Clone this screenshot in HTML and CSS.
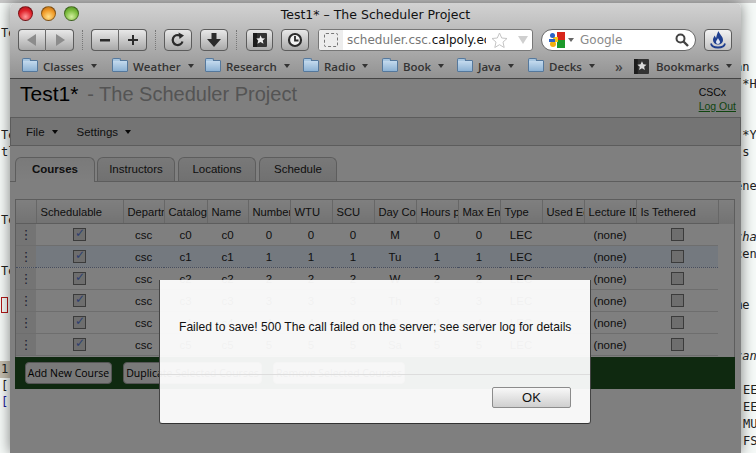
FILE: index.html
```html
<!DOCTYPE html>
<html lang="en">
<head>
    <meta charset="UTF-8">
    <meta name="viewport" content="width=device-width, initial-scale=1.0">
    <title>Test1* – The Scheduler Project</title>
    <link rel="stylesheet" href="styles.css">
</head>
<body>
    <!-- editor window behind the browser -->
    <div class="back-window">
        <div class="back-left">
            <div class="code-pane">
                <p>Te</p><p></p><p></p><p></p><p></p><p></p>
                <p>Te</p><p>tl</p><p></p><p></p><p></p>
                <p>Te</p><p></p><p></p>
                <p>Te</p><p></p>
                <p><span class="red-box"></span></p>
            </div>
            <div class="console-pane">
                <p class="console-head">1:</p>
                <p>[:</p>
                <p class="blue">[:</p>
            </div>
        </div>
        <div class="back-right">
            <div class="code-pane">
                <p></p><p></p><p>an</p><p> *H</p><p></p><p></p>
                <p> *Y</p><p> s</p><p></p><p>ene</p><p></p><p></p>
                <p><i>cha</i></p><p>cen</p><p></p><p></p><p>me</p><p></p><p></p>
                <p><i>can</i></p>
            </div>
            <div class="list-pane">
                <p>EE</p><p>EE</p><p>MU</p><p>FS</p>
            </div>
        </div>
    </div>

    <div class="browser">
        <div class="titlebar">
            <div class="lights">
                <span class="light red"></span>
                <span class="light amber"></span>
                <span class="light green"></span>
            </div>
            <span class="title-text">Test1* – The Scheduler Project</span>
        </div>

        <div class="toolbar">
            <div class="btn-group">
                <button class="tool split"><svg width="14" height="14" viewBox="0 0 14 14"><path d="M11 1v12L2 7z" fill="#8c8c8c"/></svg></button>
                <button class="tool"><svg width="14" height="14" viewBox="0 0 14 14"><path d="M3 1v12l9-6z" fill="#8c8c8c"/></svg></button>
            </div>
            <span class="sep"></span>
            <div class="btn-group">
                <button class="tool split"><svg width="14" height="14" viewBox="0 0 14 14"><path d="M2 6h10v2.400H2z" fill="#2b2b2b"/></svg></button>
                <button class="tool"><svg width="14" height="14" viewBox="0 0 14 14"><path d="M6 2h2v4h4v2H8v4H6V8H2V6h4z" fill="#2b2b2b"/></svg></button>
            </div>
            <span class="sep"></span>
            <button class="tool single"><svg width="16" height="16" viewBox="0 0 16 16"><path d="M12.500 9.500A5 5 0 1 1 10 3.600" fill="none" stroke="#2b2b2b" stroke-width="2.200"/><path d="M8.500 0.500L14 3.500 9.500 7z" fill="#2b2b2b"/></svg></button>
            <button class="tool single"><svg width="16" height="16" viewBox="0 0 16 16"><path d="M5.500 1h5v6H15l-7 8-7-8h4.500z" fill="#2b2b2b"/></svg></button>
            <span class="sep"></span>
            <button class="tool single narrow"><svg width="16" height="16" viewBox="0 0 16 16"><rect x="1" y="1" width="14" height="14" rx="1" fill="#333"/><rect x="1" y="1" width="4" height="14" fill="#1c1c1c"/><path d="M8.500 3.200l1.400 3 3.200.3-2.400 2.100.8 3.200-3-1.700-3 1.700.8-3.200L4.300 6.500l3.200-.3z" fill="#eee"/></svg></button>
            <button class="tool single"><svg width="16" height="16" viewBox="0 0 16 16"><circle cx="8" cy="8" r="6" fill="#f2f2f2" stroke="#2b2b2b" stroke-width="2.200"/><path d="M8 4v4.500h3.500" fill="none" stroke="#2b2b2b" stroke-width="1.800"/></svg></button>

            <div class="url-field">
                <span class="favicon-slot"><span class="favicon"></span></span>
                <span class="url-text">scheduler.csc.<b>calpoly.ec</b></span>
                <svg class="url-star" width="17" height="17" viewBox="0 0 17 17"><path d="M8.500 1l2.200 5 5.300.5-4 3.600 1.200 5.400-4.700-2.800-4.700 2.800 1.200-5.400-4-3.600L6.300 6z" fill="#fff" stroke="#c4c4c4"/></svg>
                <svg class="url-drop" width="10" height="8" viewBox="0 0 10 8"><path d="M0 0h10L5 8z" fill="#cfcfcf"/></svg>
            </div>

            <div class="search-field">
                <svg width="16" height="16" viewBox="0 0 16 16"><rect x="8" y="0" width="8" height="8" fill="#d8261c"/><rect x="8" y="8" width="8" height="8" fill="#1e9a2c"/><rect x="4" y="5" width="5" height="5" fill="#f5c518"/><circle cx="3.500" cy="3.500" r="2.500" fill="#2a62c8"/><circle cx="4" cy="12" r="3" fill="#f0b010"/><path d="M0 7h6v3H0z" fill="#2a62c8"/></svg>
                <span class="search-caret"></span>
                <span class="search-text">Google</span>
                <svg class="search-glass" width="14" height="14" viewBox="0 0 14 14"><circle cx="5.500" cy="5.500" r="4" fill="none" stroke="#444" stroke-width="2"/><path d="M8.500 8.500l4.500 4.500" stroke="#444" stroke-width="2.400"/></svg>
            </div>

            <button class="tool single fire"><svg width="18" height="18" viewBox="0 0 18 18"><path d="M9.500 0c.5 3 4.500 5 4.500 9 0 2.500-2 4.500-5 4.500S4 11.500 4 9c0-2 1-3.500 2-4.500 0 1.200.5 2 1.200 2.300C7.500 4.500 8.500 2 9.500 0z" fill="#1f3f8f"/><path d="M9 7c.3 1.500 2 2.400 2 4 0 1.200-.9 2-2 2s-2-.8-2-2c0-1.600 1.700-2.500 2-4z" fill="#dfe6f4"/><path d="M2 12.500c.5 2.500 3.500 4 7 4s6.500-1.500 7-4" fill="none" stroke="#1f3f8f" stroke-width="1.800"/></svg></button>
        </div>

        <div class="bookmarks">
            <span class="mark"><span class="folder"></span>Classes<span class="mark-caret"></span></span>
            <span class="mark"><span class="folder"></span>Weather<span class="mark-caret"></span></span>
            <span class="mark"><span class="folder"></span>Research<span class="mark-caret"></span></span>
            <span class="mark"><span class="folder"></span>Radio<span class="mark-caret"></span></span>
            <span class="mark"><span class="folder"></span>Book<span class="mark-caret"></span></span>
            <span class="mark"><span class="folder"></span>Java<span class="mark-caret"></span></span>
            <span class="mark"><span class="folder"></span>Decks<span class="mark-caret"></span></span>
            <span class="more">»</span>
            <span class="mark all-marks"><svg width="15" height="15" viewBox="0 0 16 16"><rect x="0" y="0" width="16" height="16" rx="1" fill="#333"/><rect x="0" y="0" width="4" height="16" fill="#1c1c1c"/><path d="M8.500 2.500l1.500 3.200 3.400.3-2.600 2.300.8 3.400-3.100-1.800-3.100 1.800.8-3.400L3.600 6l3.400-.3z" fill="#ddd"/></svg>Bookmarks<span class="mark-caret"></span></span>
        </div>

        <div class="page">
            <div class="app-header">
                <h1>Test1* <span class="subtitle">- The Scheduler Project</span></h1>
                <div class="user-box">
                    <div>CSCx</div>
                    <a href="#">Log Out</a>
                </div>
            </div>

            <div class="menubar">
                <span class="menu">File<span class="menu-caret"></span></span>
                <span class="menu">Settings<span class="menu-caret"></span></span>
            </div>

            <div class="tabs">
                <span class="tab active">Courses</span>
                <span class="tab">Instructors</span>
                <span class="tab">Locations</span>
                <span class="tab">Schedule</span>
            </div>

            <div class="grid-wrap">
                <table class="grid">
                    <colgroup>
                        <col class="c20"><col class="c87"><col class="c41"><col class="c43"><col class="c41">
                        <col class="c42"><col class="c42"><col class="c42"><col class="c42"><col class="c42">
                        <col class="c42"><col class="c42"><col class="c42"><col class="c52"><col class="c82">
                    </colgroup>
                    <thead>
                        <tr>
                            <th></th><th>Schedulable</th><th>Department</th><th>Catalog</th><th>Name</th>
                            <th>Number</th><th>WTU</th><th>SCU</th><th>Day Combo</th><th>Hours per</th>
                            <th>Max Enroll</th><th>Type</th><th>Used Equipment</th><th>Lecture ID</th><th>Is Tethered</th>
                        </tr>
                    </thead>
                    <tbody>
                        <tr>
                            <td class="handle">⋮</td><td><span class="check on"></span></td><td>csc</td><td>c0</td><td>c0</td>
                            <td>0</td><td>0</td><td>0</td><td>M</td><td>0</td><td>0</td><td>LEC</td><td></td><td>(none)</td><td><span class="check"></span></td>
                        </tr>
                        <tr class="selected">
                            <td class="handle">⋮</td><td><span class="check on"></span></td><td>csc</td><td>c1</td><td>c1</td>
                            <td>1</td><td>1</td><td>1</td><td>Tu</td><td>1</td><td>1</td><td>LEC</td><td></td><td>(none)</td><td><span class="check"></span></td>
                        </tr>
                        <tr>
                            <td class="handle">⋮</td><td><span class="check on"></span></td><td>csc</td><td>c2</td><td>c2</td>
                            <td>2</td><td>2</td><td>2</td><td>W</td><td>2</td><td>2</td><td>LEC</td><td></td><td>(none)</td><td><span class="check"></span></td>
                        </tr>
                        <tr>
                            <td class="handle">⋮</td><td><span class="check on"></span></td><td>csc</td><td>c3</td><td>c3</td>
                            <td>3</td><td>3</td><td>3</td><td>Th</td><td>3</td><td>3</td><td>LEC</td><td></td><td>(none)</td><td><span class="check"></span></td>
                        </tr>
                        <tr>
                            <td class="handle">⋮</td><td><span class="check on"></span></td><td>csc</td><td>c4</td><td>c4</td>
                            <td>4</td><td>4</td><td>4</td><td>F</td><td>4</td><td>4</td><td>LEC</td><td></td><td>(none)</td><td><span class="check"></span></td>
                        </tr>
                        <tr>
                            <td class="handle">⋮</td><td><span class="check on"></span></td><td>csc</td><td>c5</td><td>c5</td>
                            <td>5</td><td>5</td><td>5</td><td>Sa</td><td>5</td><td>5</td><td>LEC</td><td></td><td>(none)</td><td><span class="check"></span></td>
                        </tr>
                    </tbody>
                </table>
            </div>

            <div class="actions">
                <button class="action add">Add New Course</button>
                <button class="action dup">Duplicate Selected Courses</button>
                <button class="action rem">Remove Selected Courses</button>
            </div>

            <div class="overlay"></div>
            <div class="dialog">
                <p class="dialog-msg">Failed to save! 500 The call failed on the server; see server log for details</p>
                <div class="dialog-foot">
                    <button class="ok-btn">OK</button>
                </div>
            </div>
        </div>
    </div>
</body>
</html>
```

FILE: styles.css
```css
html, body {
    margin: 0;
    height: 100%;
    overflow: hidden;
}
body {
    position: relative;
    width: 756px;
    height: 453px;
    background: #f6faf8;
    font-family: "Liberation Sans", Arial, sans-serif;
}

/* editor window showing around the browser */
.back-window {
    position: absolute;
    inset: 0;
    border-top: 3px solid #c8c8c8;
    font-family: "DejaVu Sans Mono", monospace;
    font-size: 12px;
    color: #222;
}
.back-window p {
    margin: 0;
    height: 17px;
    line-height: 17px;
    white-space: pre;
}
.back-left {
    position: absolute;
    left: 0;
    top: 0;
    width: 11px;
    height: 100%;
    padding-left: 1px;
    box-sizing: border-box;
    overflow: hidden;
}
.back-right {
    position: absolute;
    left: 735px;
    top: 0;
    width: 21px;
    height: 100%;
    overflow: hidden;
}
.code-pane { padding-top: 22px; }
.red-box {
    display: inline-block;
    width: 5px;
    height: 14px;
    border: 1px solid #b01818;
    vertical-align: -3px;
}
.console-pane { margin: 47px 0 0 -1px; }
.console-pane p { padding-left: 1px; height: 16.500px; }
.console-head { background: #c4bdae; }
.blue { color: #1a1a9a; }
.list-pane {
    padding: 17px 0 0 8px;
}

/* browser window */
.browser {
    position: absolute;
    left: 10px;
    top: 3px;
    width: 731px;
    height: 450px;
    display: flex;
    flex-direction: column;
    border-radius: 5px 5px 0 0;
    background: linear-gradient(#d2d2d2, #c2c2c2 20px, #929292 75px);
    box-shadow: 0 0 14px rgba(0,0,0,0.5);
    overflow: hidden;
}
.titlebar {
    position: relative;
    height: 26px;
    flex: none;
    display: flex;
    justify-content: center;
    align-items: center;
}
.title-text {
    font-family: "DejaVu Sans", sans-serif;
    font-size: 12.500px;
    color: #111;
    margin-top: -4px;
}
.lights {
    position: absolute;
    left: 8px;
    top: 3px;
    display: flex;
    gap: 8px;
}
.light {
    width: 13px;
    height: 13px;
    border-radius: 50%;
    border: 0.500px solid rgba(0,0,0,0.4);
}
.red { background: radial-gradient(circle at 50% 75%, #ff9a9a, #e0232b 55%, #a01018); }
.amber { background: radial-gradient(circle at 50% 75%, #ffe08a, #f09a28 55%, #b06410); }
.green { background: radial-gradient(circle at 50% 75%, #d4f0a0, #7cbc3c 55%, #4a8a20); }

.toolbar {
    display: flex;
    align-items: center;
    height: 22px;
    flex: none;
    padding-left: 8px;
}
.btn-group { display: flex; }
.tool {
    width: 28px;
    height: 22px;
    padding: 0;
    display: flex;
    align-items: center;
    justify-content: center;
    border: 1px solid #5c5c5c;
    background: linear-gradient(#e8e8e8, #a9a9a9);
    box-sizing: border-box;
}
.btn-group .tool:first-child { border-radius: 4px 0 0 4px; border-right: 1px solid #6a6a6a; }
.btn-group .tool:last-child { border-radius: 0 4px 4px 0; border-left: none; }
.single { border-radius: 4px; margin-right: 8px; }
.narrow { width: 27px; }
.sep {
    width: 0;
    height: 20px;
    margin: 0 8px;
    border-left: 1px dotted #777;
}
.single + .sep { margin: 0 9px 0 0; }
.url-field {
    width: 215px;
    height: 22px;
    margin-left: 1px;
    display: flex;
    align-items: center;
    box-sizing: border-box;
    background: #fff;
    border: 1px solid #777;
    border-radius: 3px;
    overflow: hidden;
    position: relative;
}
.favicon-slot {
    width: 24px;
    height: 100%;
    flex: none;
    display: flex;
    align-items: center;
    justify-content: center;
    background: #ededed;
}
.favicon {
    width: 12px;
    height: 12px;
    border: 1px dashed #777;
    border-radius: 2px;
}
.url-text {
    margin-left: 4px;
    width: 139px;
    flex: none;
    overflow: hidden;
    white-space: nowrap;
    font-family: "DejaVu Sans", sans-serif;
    font-size: 12px;
    color: #777;
}
.url-text b { font-weight: normal; color: #111; }
.url-star { margin-left: 5px; flex: none; }
.url-drop { margin-left: 10px; flex: none; }
.search-field {
    width: 155px;
    height: 22px;
    margin-left: 8px;
    padding: 0 6px 0 7px;
    display: flex;
    align-items: center;
    box-sizing: border-box;
    background: #fff;
    border: 1px solid #666;
    border-radius: 11px;
}
.search-caret {
    margin-left: 3px;
    border-left: 3px solid transparent;
    border-right: 3px solid transparent;
    border-top: 4px solid #666;
}
.search-text {
    margin-left: 6px;
    font-family: "DejaVu Sans", sans-serif;
    font-size: 12px;
    color: #8a8a8a;
}
.search-glass { margin-left: auto; }
.fire { margin: 0 0 0 8px; background: linear-gradient(#f2f2f2, #c4c4c4); }

.bookmarks {
    display: grid;
    grid-template-columns: 90px 93px 98px 79px 75px 71px 87px 19px auto;
    align-items: center;
    height: 28px;
    flex: none;
    padding: 3px 0 0 12px;
    box-sizing: border-box;
    border-bottom: 1px solid #444;
    font-family: "Open Sans", sans-serif;
    font-size: 11.500px;
    font-weight: 600;
    color: #333;
}
.mark {
    display: flex;
    align-items: center;
    white-space: nowrap;
}
.folder {
    position: relative;
    width: 16px;
    height: 12px;
    margin-right: 5px;
    box-sizing: border-box;
    border: 1px solid #55789c;
    border-radius: 1px;
    background: linear-gradient(#c4daee, #8db2d4);
}
.folder::before {
    content: "";
    position: absolute;
    left: -1px;
    top: -3px;
    width: 7px;
    height: 2px;
    border: 1px solid #55789c;
    border-bottom: none;
    border-radius: 2px 2px 0 0;
    background: #a8c6e0;
}
.mark-caret {
    margin-left: 7px;
    border-left: 3px solid transparent;
    border-right: 3px solid transparent;
    border-top: 4px solid #333;
}
.more {
    font-size: 14px;
    color: #444;
}
.all-marks svg { margin-right: 7px; }

/* page inside the browser */
.page {
    position: relative;
    flex: 1;
    background: #fff;
}
.app-header {
    height: 38px;
    display: flex;
    justify-content: space-between;
    padding: 0 5px 0 10px;
}
h1 {
    margin: 3px 0 0;
    font-size: 21px;
    line-height: 24px;
    font-weight: normal;
    color: #000;
}
.subtitle {
    margin-left: 3px;
    font-size: 20px;
    color: #a9a9a9;
}
.user-box {
    padding-top: 6px;
    font-size: 10.500px;
    line-height: 14px;
    color: #111;
}
.user-box a { color: #1e8a1e; }
.menubar {
    height: 29px;
    display: flex;
    align-items: center;
    gap: 19px;
    padding-left: 15px;
    box-sizing: border-box;
    border: 1px solid #b8b8b8;
    background: #e8e8e8;
    font-size: 11.500px;
    color: #222;
}
.menu-caret {
    display: inline-block;
    margin-left: 7px;
    vertical-align: 2px;
    border-left: 3px solid transparent;
    border-right: 3px solid transparent;
    border-top: 4px solid #111;
}
.tabs {
    display: flex;
    align-items: flex-end;
    gap: 3px;
    height: 24px;
    margin-top: 11px;
    padding-left: 5px;
    border-bottom: 1px solid #bbb;
}
.tab {
    width: 78px;
    height: 24px;
    padding-bottom: 2px;
    display: flex;
    align-items: center;
    justify-content: center;
    box-sizing: border-box;
    border: 1px solid #bbb;
    border-bottom: none;
    border-radius: 6px 6px 0 0;
    background: linear-gradient(#f2f2f2, #e2e2e2);
    font-size: 11.500px;
    color: #222;
}
.tab.active {
    width: 80px;
    height: 25px;
    margin: 0 -1px -1px 0;
    background: linear-gradient(#f4f4f4, #fff);
    font-weight: bold;
}
.grid-wrap {
    margin: 17px 5px 0;
    width: 720px;
    height: 158px;
    box-sizing: border-box;
    border: 1px solid #bbb;
    border-bottom: none;
    background: linear-gradient(#fff, #e6e6e6) top / 100% 24px no-repeat;
}
.grid {
    width: 702px;
    table-layout: fixed;
    border-collapse: collapse;
    font-size: 11.500px;
    color: #222;
}
.c20 { width: 20px; }
.c41 { width: 41px; }
.c42 { width: 42px; }
.c43 { width: 43px; }
.c52 { width: 52px; }
.c82 { width: 82px; }
.c87 { width: 87px; }
.grid th {
    height: 23px;
    padding: 0 0 0 4px;
    overflow: hidden;
    white-space: nowrap;
    text-align: left;
    font-size: 11.200px;
    font-weight: normal;
    border-right: 1px solid #cfcfcf;
    border-bottom: 1px solid #bbb;
    background: linear-gradient(#fff, #e6e6e6);
}
.grid td {
    height: 22px;
    padding: 0;
    text-align: center;
    overflow: hidden;
    white-space: nowrap;
    border-bottom: 1px solid #dcdcdc;
    box-sizing: border-box;
}
.grid td.handle {
    background: #e9e9e9;
    color: #446;
    font-family: "DejaVu Sans", sans-serif;
    font-size: 13px;
}
.selected td {
    background: #e8f2ff;
    border-bottom: 1px dotted #8c9cc0;
}
.check {
    display: inline-block;
    position: relative;
    width: 13px;
    height: 13px;
    vertical-align: middle;
    box-sizing: border-box;
    border: 1px solid #777;
    background: #ddd;
}
.check.on::after {
    content: "✓";
    position: absolute;
    left: 1px;
    top: -3px;
    font-family: "DejaVu Sans", sans-serif;
    font-size: 12px;
    font-weight: bold;
    color: #5a7fe0;
}
.actions {
    width: 720px;
    height: 32px;
    margin: 0 5px;
    padding: 5px 0 0 10px;
    display: flex;
    gap: 11px;
    box-sizing: border-box;
    background: #1f5220;
}
.action {
    height: 22px;
    padding: 0;
    border: 1px solid #aaa;
    border-radius: 4px;
    background: #f2f2f2;
    font-family: "Open Sans", sans-serif;
    font-size: 10.500px;
    white-space: nowrap;
    overflow: hidden;
    color: #000;
}
.add { width: 87px; }
.dup { width: 139px; }
.rem { width: 132px; }
.overlay {
    position: absolute;
    inset: 0;
    background: rgba(0,0,0,0.5);
}
.dialog {
    position: absolute;
    left: 149px;
    top: 201px;
    width: 432px;
    height: 144px;
    display: flex;
    flex-direction: column;
    box-sizing: border-box;
    border-radius: 0 0 3px 3px;
    border-bottom: 1px solid #333;
    border-left: 1px solid #444;
    border-right: 1px solid #444;
    background: rgba(255,255,255,0.94);
}
.dialog-msg {
    margin: 40px 0 0 19px;
    height: 54px;
    font-size: 12.100px;
    line-height: 14px;
    color: #111;
}
.dialog-foot {
    flex: 1;
    padding: 12px 19px 0 0;
    display: flex;
    justify-content: flex-end;
    align-items: flex-start;
    border-top: 1px solid #ddd;
}
.ok-btn {
    width: 79px;
    height: 21px;
    padding: 0;
    border: 1px solid #8c8c8c;
    border-radius: 2px;
    background: linear-gradient(#f8f8f8, #cfcfcf);
    font-family: "Liberation Sans", Arial, sans-serif;
    font-size: 13px;
    color: #111;
}
```
